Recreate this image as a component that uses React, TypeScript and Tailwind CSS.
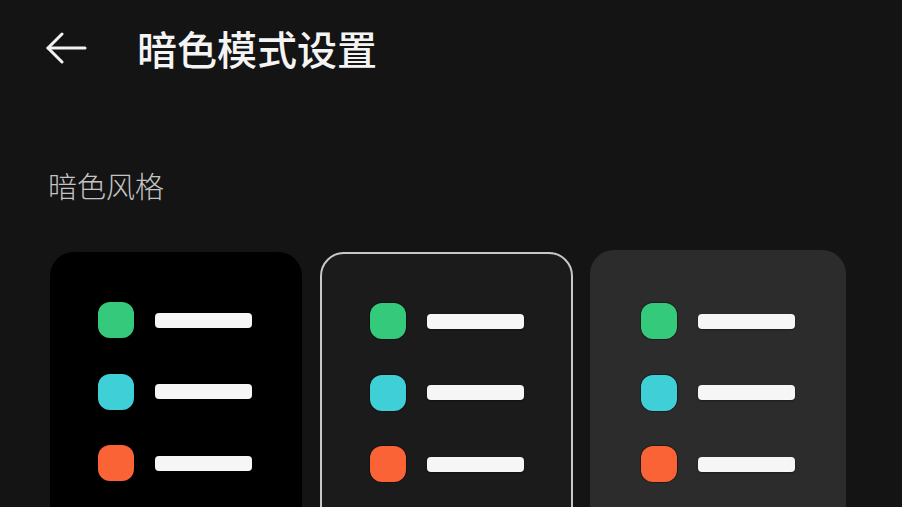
const ROWS = ['bg-[#35c97c]', 'bg-[#3ecfd7]', 'bg-[#fa6335]'];

function ListPreview() {
    return (
        <div className="flex flex-col gap-[35.5px]">
            {ROWS.map((color, i) => (
                <div key={i} className="flex items-center gap-[21px]">
                    <div className={`h-[36px] w-[36px] rounded-[12px] ${color} shadow-[0_0_0_1px_rgba(0,0,0,0.35)]`} />
                    <div className="h-[15px] w-[97px] rounded-[4px] bg-[#f6f6f6] shadow-[0_1px_2px_rgba(0,0,0,0.4)]" />
                </div>
            ))}
        </div>
    );
}

export default function App() {
    return (
        <div className="h-[507px] w-[902px] overflow-hidden bg-[#141414] text-white" style={{ fontFamily: '"Noto Sans CJK SC", "Noto Sans", sans-serif' }}>
            {/* Header */}
            <div className="mt-[28px] flex h-[40px] items-center pl-[46px]">
                <svg width="41" height="32" viewBox="0 0 41 32" fill="none" stroke="#f2f2f2" strokeWidth="3" strokeLinecap="round" strokeLinejoin="round">
                    <path d="M2 16H39" />
                    <path d="M16 2L2 16L16 30" />
                </svg>
                <h1 className="ml-[50px] text-[40px] leading-[40px] font-medium text-[#f4f4f4]">暗色模式设置</h1>
            </div>

            {/* Section label */}
            <div className="mt-[103px] pl-[48px] text-[29px] leading-[29px] font-light text-[#c4c4c4]">暗色风格</div>

            {/* Style options */}
            <div className="mt-[52px] flex items-start pl-[50px]">
                <div className="h-[280px] w-[252px] rounded-[24px] bg-black pl-[48px] pt-[50px]">
                    <ListPreview />
                </div>
                <div className="ml-[18px] h-[280px] w-[253px] rounded-[24px] border-2 border-[#c8c8c8] bg-[#1b1b1b] pl-[48px] pt-[49px]">
                    <ListPreview />
                </div>
                <div className="ml-[17px] -mt-[2px] h-[280px] w-[256px] rounded-[24px] bg-[#2c2c2c] pl-[51px] pt-[53px]">
                    <ListPreview />
                </div>
            </div>
        </div>
    );
}
